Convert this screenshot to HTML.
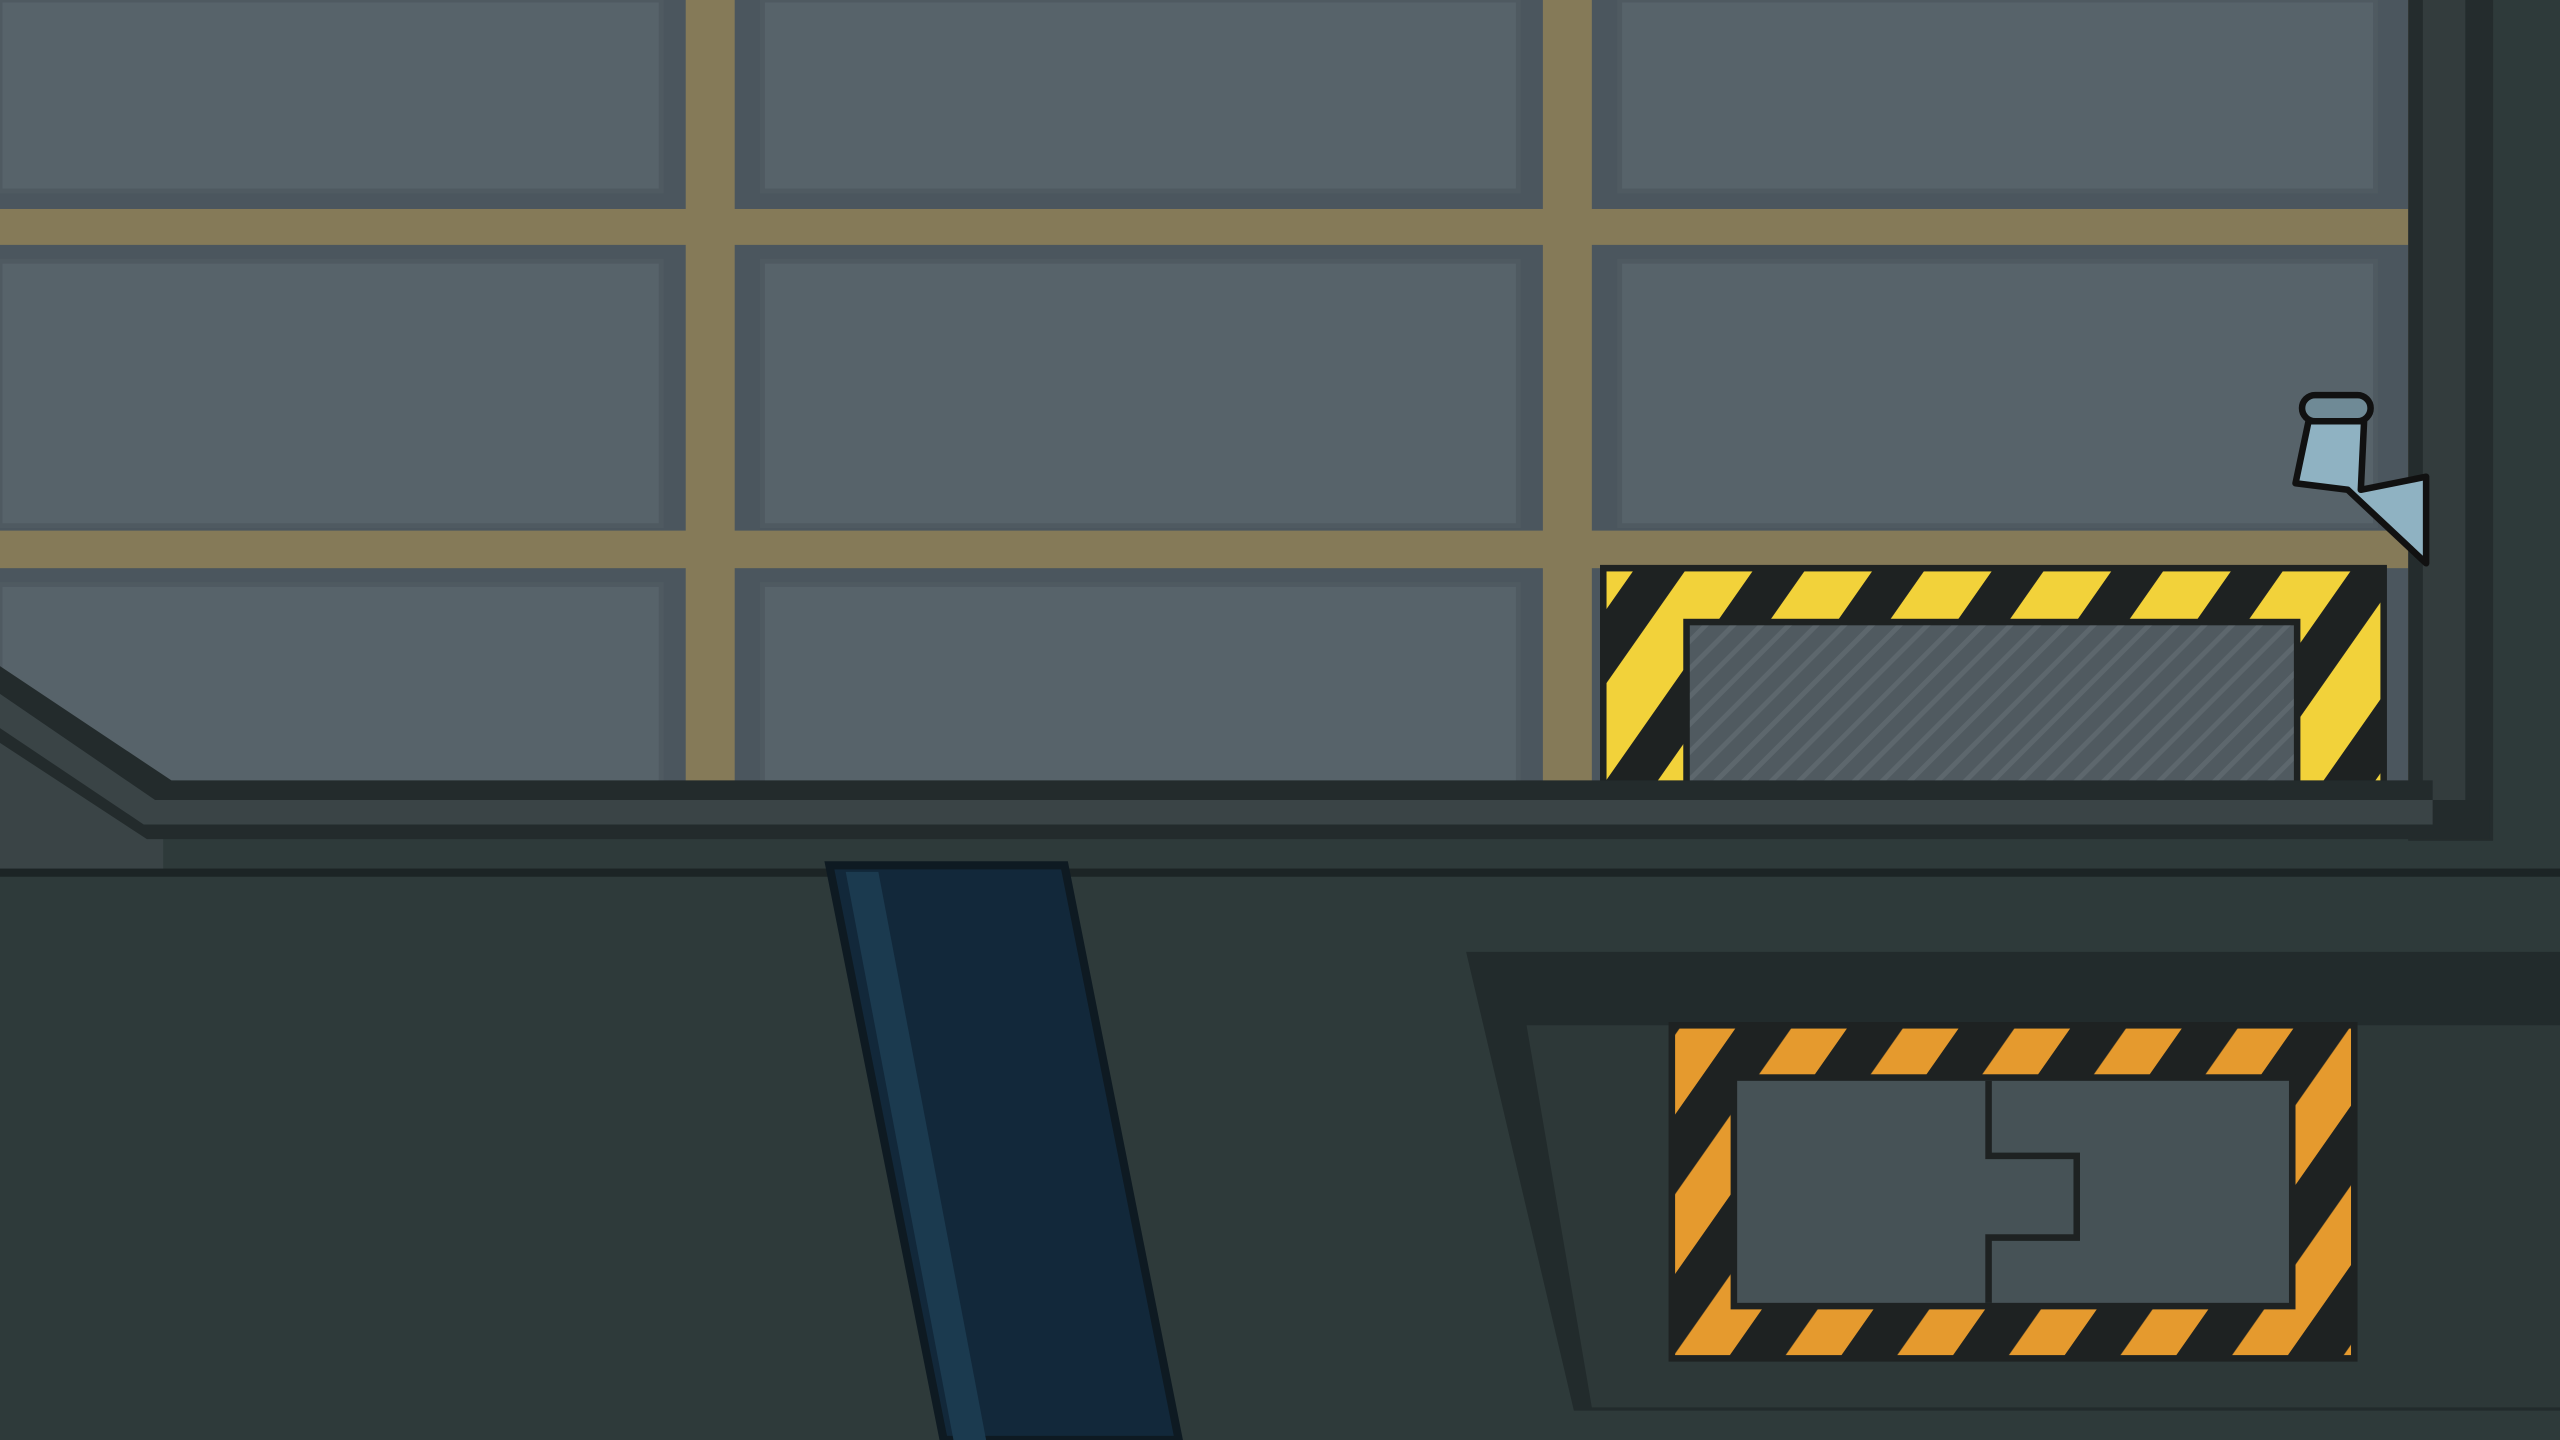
<!DOCTYPE html>
<html><head><meta charset="utf-8"><style>
html,body{margin:0;padding:0;background:#2e3a3a;overflow:hidden}
svg{display:block}
</style></head><body>
<svg width="2560" height="1440" viewBox="0 0 1568 882" preserveAspectRatio="none" xmlns="http://www.w3.org/2000/svg">
<defs>
<pattern id="yel" patternUnits="userSpaceOnUse" width="60" height="60" patternTransform="rotate(35)">
<rect width="60" height="60" fill="#f2d23a"/><rect width="26" height="60" fill="#1e2222"/></pattern>
<pattern id="org" patternUnits="userSpaceOnUse" width="56" height="56" patternTransform="rotate(35)">
<rect width="56" height="56" fill="#e59a2e"/><rect width="28" height="56" fill="#1e2222"/></pattern>
<pattern id="hatch" patternUnits="userSpaceOnUse" width="12" height="12" patternTransform="rotate(45)">
<rect width="12" height="12" fill="#505a60"/><rect width="3" height="12" fill="#5d676d"/></pattern>
</defs>
<rect x="0" y="0" width="1480" height="490" fill="#857a58"/>
<g fill="#4b565e">
<rect x="0" y="0" width="420" height="128"/><rect x="450" y="0" width="495" height="128"/><rect x="975" y="0" width="500" height="128"/>
<rect x="0" y="150" width="420" height="175"/><rect x="450" y="150" width="495" height="175"/><rect x="975" y="150" width="500" height="175"/>
<rect x="0" y="348" width="420" height="140"/><rect x="450" y="348" width="495" height="140"/><rect x="975" y="348" width="500" height="140"/>
</g>
<g fill="#57636a" stroke="#4f5a61" stroke-width="3">
<rect x="0" y="0" width="405" height="117"/><rect x="467" y="0" width="463" height="117"/><rect x="992" y="0" width="463" height="117"/>
<rect x="0" y="160" width="405" height="162"/><rect x="467" y="160" width="463" height="162"/><rect x="992" y="160" width="463" height="162"/>
<rect x="0" y="358" width="405" height="130"/><rect x="467" y="358" width="463" height="130"/>
</g>
<rect x="982" y="348" width="478" height="135" fill="url(#yel)" stroke="#1e2222" stroke-width="4"/>
<rect x="1033" y="381" width="374" height="102" fill="url(#hatch)" stroke="#1e2222" stroke-width="4"/>
<rect x="1475" y="0" width="52" height="515" fill="#242c2d"/>
<rect x="1484" y="0" width="26" height="490" fill="#333c3d"/>
<polygon points="0,415 100,485 100,540 0,540" fill="#3a4446"/>
<polygon points="0,408 105,478 1490,478 1490,490 1525,490 1525,514 90,514 0,455" fill="#232b2c"/>
<polygon points="0,425 95,490 1490,490 1490,505 88,505 0,446" fill="#3a4446"/>
<rect x="0" y="535" width="1568" height="347" fill="#2e3a3a"/>
<rect x="0" y="532" width="1568" height="5" fill="#1c2425"/>
<polygon points="508,530 652,530 722,882 578,882" fill="#12283a" stroke="#0e1a22" stroke-width="5"/>
<polygon points="518,534 538,534 604,882 584,882" fill="#1b3a4f"/>
<polygon points="898,583 1568,583 1568,864 964,864" fill="#222b2c"/>
<polygon points="935,628 1568,628 1568,862 975,862" fill="#2d3838"/>
<rect x="1024" y="628" width="418" height="204" fill="url(#org)" stroke="#1e2222" stroke-width="4"/>
<rect x="1062" y="660" width="342" height="140" fill="#465256" stroke="#1e2222" stroke-width="4"/>
<path d="M1218 662 V708 H1272 V758 H1218 V798" fill="none" stroke="#1e2222" stroke-width="4"/>
<g stroke="#111" stroke-width="4" stroke-linejoin="round">
<rect x="1410" y="242" width="42" height="16" rx="8" fill="#6f8a96"/>
<path d="M1414 258 L1448 258 L1446 300 L1486 292 L1486 345 L1438 300 L1406 296 Z" fill="#8fb2c2"/>
</g>
</svg>
</body></html>
